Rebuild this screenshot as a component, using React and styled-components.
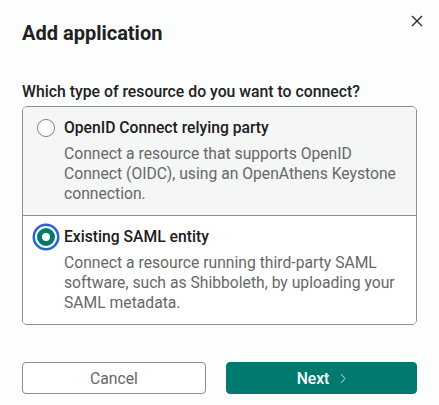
import React, { useState } from 'react';
import styled, { createGlobalStyle, css } from 'styled-components';

const color = {
  page: '#fcfdfd',
  text: '#212121',
  muted: '#666868',
  border: '#8c8f8f',
  teal: '#00796e',
  focus: '#2563d9',
  tint: '#f5f6f6',
};

const GlobalStyle = createGlobalStyle`
  html, body {
    margin: 0;
    background: ${color.page};
  }
  body {
    font-family: Roboto, "Liberation Sans", Arial, sans-serif;
    color: ${color.text};
  }
  * { box-sizing: border-box; }
`;

const Dialog = styled.div`
  width: 439px;
  height: 405px;
  padding: 19px 22px 0;
  display: flex;
  flex-direction: column;
`;

const Header = styled.div`
  display: flex;
  justify-content: space-between;
  align-items: flex-start;
`;

const Title = styled.h2`
  margin: 0;
  font-size: 20px;
  line-height: 28px;
  font-weight: 700;
`;

const CloseButton = styled.button`
  appearance: none;
  border: none;
  background: none;
  padding: 0;
  margin: -4px -6px 0 0;
  width: 12px;
  height: 12px;
  display: flex;
  color: #2b2b2b;
  cursor: pointer;
`;

const Fieldset = styled.fieldset`
  margin: 33px 0 0;
  padding: 0;
  border: none;
`;

const Legend = styled.legend`
  padding: 0;
  margin-bottom: 2px;
  font-size: 15.8px;
  line-height: 24px;
  font-weight: 500;
`;

const OptionList = styled.div`
  border: 1px solid ${color.border};
  border-radius: 5px;
  overflow: hidden;
`;

const Option = styled.label`
  display: grid;
  grid-template-columns: 18px 1fr;
  column-gap: 9px;
  padding: 9px 8px 11px 14px;
  background: ${p => (p.$selected ? '#ffffff' : color.tint)};
  cursor: pointer;

  & + & {
    border-top: 1px solid ${color.border};
  }
`;

const Radio = styled.span`
  width: 18px;
  height: 18px;
  margin-top: 3px;
  border-radius: 50%;
  border: 1px solid #7d8080;
  background: #fff;

  ${p =>
    p.$checked &&
    css`
      border: 5.5px solid ${color.teal};
      box-shadow: 0 0 0 2px #fff, 0 0 0 4.5px ${color.focus};
    `}
`;

const OptionTitle = styled.div`
  font-size: 15.7px;
  line-height: 24px;
  font-weight: 500;
  color: #1c1c1c;
`;

const OptionText = styled.div`
  grid-column: 2;
  margin-top: 4px;
  font-size: 15.7px;
  line-height: 20px;
  color: ${color.muted};
`;

const Footer = styled.div`
  margin-top: 37px;
  display: grid;
  grid-template-columns: 184px 1fr;
  gap: 20px;
`;

const Button = styled.button`
  appearance: none;
  height: 32px;
  border-radius: 4px;
  font-family: inherit;
  font-size: 15.7px;
  display: flex;
  align-items: center;
  justify-content: center;
  gap: 11px;
  cursor: pointer;

  ${p =>
    p.$primary
      ? css`
          border: 1px solid ${color.teal};
          background: ${color.teal};
          color: #fff;
          font-weight: 500;
        `
      : css`
          border: 1px solid ${color.border};
          background: #fff;
          color: ${color.muted};
        `}
`;

const options = [
  {
    id: 'oidc',
    title: 'OpenID Connect relying party',
    text: 'Connect a resource that supports OpenID Connect (OIDC), using an OpenAthens Keystone connection.',
  },
  {
    id: 'saml',
    title: 'Existing SAML entity',
    text: 'Connect a resource running third-party SAML software, such as Shibboleth, by uploading your SAML metadata.',
  },
];

export default function App() {
  const [selected, setSelected] = useState('saml');

  return (
    <>
      <GlobalStyle />
      <Dialog>
        <Header>
          <Title>Add application</Title>
          <CloseButton aria-label="Close">
            <svg width="12" height="12" viewBox="0 0 12 12">
              <path d="M1 1L11 11M11 1L1 11" stroke="currentColor" strokeWidth="1.4" />
            </svg>
          </CloseButton>
        </Header>
        <Fieldset>
          <Legend>Which type of resource do you want to connect?</Legend>
          <OptionList>
            {options.map(o => (
              <Option key={o.id} $selected={selected === o.id} onClick={() => setSelected(o.id)}>
                <Radio $checked={selected === o.id} />
                <OptionTitle>{o.title}</OptionTitle>
                <OptionText>{o.text}</OptionText>
              </Option>
            ))}
          </OptionList>
        </Fieldset>
        <Footer>
          <Button>Cancel</Button>
          <Button $primary>
            Next
            <svg width="6" height="11" viewBox="0 0 6 11">
              <path d="M1 1l4 4.5L1 10" fill="none" stroke="#bfe0dc" strokeWidth="1" />
            </svg>
          </Button>
        </Footer>
      </Dialog>
    </>
  );
}
